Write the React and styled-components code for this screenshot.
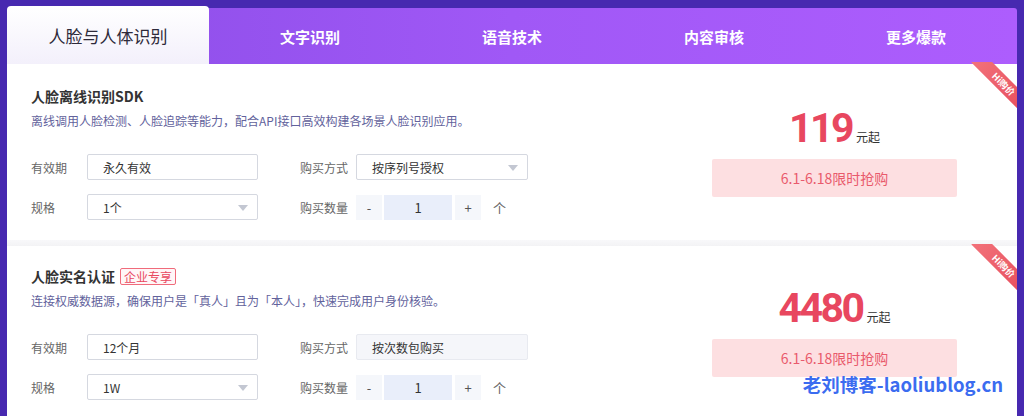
import React from "react"
import styled, { createGlobalStyle } from "styled-components"

const Global = createGlobalStyle`
  html, body { margin: 0; padding: 0; }
  body {
    font-family: "Noto Sans CJK SC", "Noto Sans", sans-serif;
    background: #4729b0;
  }
`

const Page = styled.div`
  position: relative;
  height: 416px;
  overflow: hidden;
  background: #4729b0;
  padding: 6px 7px 0 7px;
  box-sizing: border-box;
`

const Tabs = styled.div`
  display: grid;
  grid-template-columns: repeat(5, 1fr);
  height: 56px;
  margin-top: 2px;
  background: linear-gradient(90deg, #8b4de7 0%, #a058f6 50%, #ad5dfd 100%);
  border-radius: 3px 3px 0 0;
`

const Tab = styled.div`
  display: flex;
  align-items: center;
  justify-content: center;
  font-size: ${(p) => (p.active ? "17px" : "15px")};
  font-weight: ${(p) => (p.active ? 400 : 700)};
  color: ${(p) => (p.active ? "#2e2a3a" : "#fff")};
  ${(p) =>
    p.active
      ? `
    margin-top: -2px;
    background: linear-gradient(180deg, #ffffff 0%, #f3f0fb 100%);
    border-radius: 4px 4px 0 0;
  `
      : ""}
`

const Card = styled.div`
  position: relative;
  display: flex;
  background: #fff;
  padding: ${(p) => p.top}px 60px 0 24px;
  height: 176px;
  box-sizing: border-box;
`

const Gap = styled.div`
  height: 6px;
  background: linear-gradient(180deg, #f8f8fa, #f3f3f5);
`

const Info = styled.div`
  flex: 1;
`

const Title = styled.div`
  display: flex;
  align-items: center;
  font-size: 14px;
  font-weight: 700;
  color: #333;
  height: 20px;
`

const Tag = styled.span`
  margin-left: 5px;
  font-size: 12px;
  font-weight: 400;
  color: #e8475f;
  border: 1px solid #f06b7b;
  background: #fff6f7;
  border-radius: 2px;
  padding: 0 3px;
  line-height: 15px;
`

const Desc = styled.div`
  margin-top: 6px;
  font-size: 12px;
  color: #62629c;
  line-height: 18px;
`

const Form = styled.div`
  margin-top: 24px;
  display: grid;
  grid-template-columns: 56px 171px 98px auto;
  row-gap: 14px;
  align-items: center;
`

const Label = styled.div`
  font-size: 12px;
  color: #666;
  white-space: nowrap;
  padding-left: ${(p) => (p.second ? "42px" : "0")};
`

const Field = styled.div`
  position: relative;
  height: 26px;
  width: ${(p) => p.w || 171}px;
  box-sizing: border-box;
  border: 1px solid ${(p) => (p.disabled ? "#e8eaf0" : "#d5d8e0")};
  background: ${(p) => (p.disabled ? "#f5f6fa" : "#fff")};
  border-radius: 2px;
  display: flex;
  align-items: center;
  padding-left: 15px;
  font-size: 12px;
  color: #333;
`

const Arrow = styled.span`
  position: absolute;
  right: 9px;
  top: 10px;
  width: 0;
  height: 0;
  border-left: 5px solid transparent;
  border-right: 5px solid transparent;
  border-top: 6px solid #c3c7d2;
`

const Qty = styled.div`
  display: flex;
  align-items: center;
  gap: 2px;
  height: 25px;
  font-size: 13px;
  color: #555;
`

const QtyBtn = styled.div`
  width: 26px;
  height: 25px;
  background: #f5f7fb;
  display: flex;
  align-items: center;
  justify-content: center;
  margin-left: ${(p) => (p.after ? "1px" : "0")};
`

const QtyVal = styled.div`
  width: 68px;
  height: 25px;
  background: #e9eefa;
  display: flex;
  align-items: center;
  justify-content: center;
  color: #333;
  font-size: 13px;
`

const Unit = styled.span`
  margin-left: 10px;
  font-size: 13px;
  color: #666;
`

const Side = styled.div`
  width: 245px;
  display: flex;
  flex-direction: column;
  align-items: center;
  padding-top: 17px;
`

const Price = styled.div`
  display: flex;
  align-items: baseline;
  height: 50px;
`

const Num = styled.span`
  font-family: Roboto, "Liberation Sans", sans-serif;
  font-size: 41px;
  font-weight: 700;
  letter-spacing: -2.5px;
  color: #e8475f;
  line-height: 50px;
`

const From = styled.span`
  margin-left: 4px;
  font-size: 12px;
  color: #333;
`

const Promo = styled.div`
  margin-top: 6px;
  width: 245px;
  height: 38px;
  background: #fddfe1;
  border-radius: 2px;
  display: flex;
  align-items: center;
  justify-content: center;
  font-size: 14px;
  color: #e95a6c;
`

const Corner = styled.div`
  position: absolute;
  top: -2px;
  right: 0;
  width: 46px;
  height: 46px;
  overflow: hidden;
`

const Band = styled.div`
  position: absolute;
  left: -4px;
  top: 11px;
  width: 66px;
  height: 15px;
  transform: rotate(45deg);
  background: linear-gradient(90deg, #f2727a, #e8505f);
  color: #fff;
  font-size: 9px;
  font-weight: 700;
  line-height: 15px;
  text-align: center;
  text-indent: 10px;
`

const Watermark = styled.div`
  position: absolute;
  right: 21px;
  bottom: 19px;
  font-family: "Noto Sans CJK SC", "Liberation Sans", sans-serif;
  font-size: 18.5px;
  font-weight: 700;
  color: #3b6cf0;
`

const products = [
  {
    title: "人脸离线识别SDK",
    desc: "离线调用人脸检测、人脸追踪等能力，配合API接口高效构建各场景人脸识别应用。",
    period: "永久有效",
    mode: "按序列号授权",
    modeSelect: true,
    spec: "1个",
    price: "119",
    top: 22,
  },
  {
    title: "人脸实名认证",
    tag: "企业专享",
    desc: "连接权威数据源，确保用户是「真人」且为「本人」，快速完成用户身份核验。",
    period: "12个月",
    mode: "按次数包购买",
    modeSelect: false,
    spec: "1W",
    price: "4480",
    top: 20,
  },
]

function Product({ p }) {
  return (
    <Card top={p.top}>
      <Info>
        <Title>
          {p.title}
          {p.tag && <Tag>{p.tag}</Tag>}
        </Title>
        <Desc>{p.desc}</Desc>
        <Form>
          <Label>有效期</Label>
          <Field>{p.period}</Field>
          <Label second>购买方式</Label>
          <Field w={172} disabled={!p.modeSelect}>
            {p.mode}
            {p.modeSelect && <Arrow />}
          </Field>
          <Label>规格</Label>
          <Field>
            {p.spec}
            <Arrow />
          </Field>
          <Label second>购买数量</Label>
          <Qty>
            <QtyBtn>-</QtyBtn>
            <QtyVal>1</QtyVal>
            <QtyBtn after>+</QtyBtn>
            <Unit>个</Unit>
          </Qty>
        </Form>
      </Info>
      <Side>
        <Price>
          <Num>{p.price}</Num>
          <From>元起</From>
        </Price>
        <Promo>6.1-6.18限时抢购</Promo>
      </Side>
      <Corner>
        <Band>Hi购价</Band>
      </Corner>
    </Card>
  )
}

export default function App() {
  const tabs = ["人脸与人体识别", "文字识别", "语音技术", "内容审核", "更多爆款"]
  return (
    <>
      <Global />
      <Page>
        <Tabs>
          {tabs.map((t, i) => (
            <Tab key={t} active={i === 0}>
              {t}
            </Tab>
          ))}
        </Tabs>
        <Product p={products[0]} />
        <Gap />
        <Product p={products[1]} />
        <Watermark>老刘博客-laoliublog.cn</Watermark>
      </Page>
    </>
  )
}
